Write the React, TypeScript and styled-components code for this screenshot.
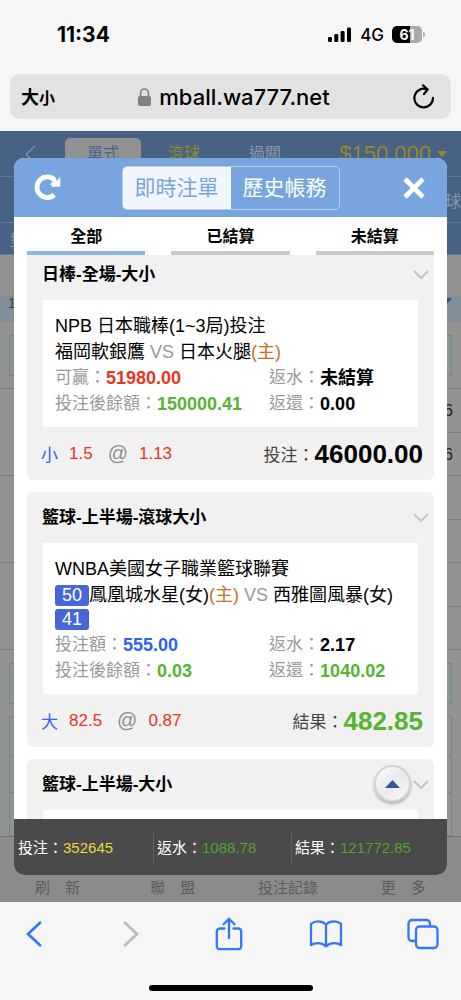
import React, { useEffect, useRef, useState } from "react";
import styled, { createGlobalStyle } from "styled-components";

const GlobalStyle = createGlobalStyle`
  *, *::before, *::after { box-sizing: border-box; }
  body { margin: 0; background: #f6f6f6; }
  button { font: inherit; color: inherit; background: none; border: 0; padding: 0; margin: 0; cursor: pointer; }
  a { color: inherit; text-decoration: none; }
  h2, dl, dd, dt, p { margin: 0; font: inherit; }
`;

const Phone = styled.div`
  display: flex;
  flex-direction: column;
  height: 100vh;
  min-height: 600px;
  background: #f6f6f6;
  color: #000;
  font-family: "Liberation Sans", "Noto Sans CJK TC", sans-serif;
  font-size: 17px;
`;

/* ---------- browser chrome ---------- */

const StatusBar = styled.header`
  display: flex;
  align-items: center;
  justify-content: space-between;
  height: 69px;
  padding: 0 36px 0 57px;
  font-family: Inter, sans-serif;
`;

const Clock = styled.time`
  font-size: 21px;
  font-weight: 700;
`;

const StatusIcons = styled.div`
  display: flex;
  align-items: center;
  gap: 8px;
  font-size: 17px;
  font-weight: 500;
`;

const Battery = styled.div`
  display: flex;
  align-items: center;
  gap: 1px;
  &::after {
    content: "";
    width: 2px;
    height: 5px;
    border-radius: 0 2px 2px 0;
    background: #a9a9a9;
  }
`;

const BatteryBody = styled.div`
  width: 30px;
  height: 17px;
  border-radius: 5px;
  background: linear-gradient(90deg, #000 61%, #a9a9a9 61%);
  color: #fff;
  font-size: 14px;
  font-weight: 700;
  line-height: 17px;
  text-align: center;
`;

const AddressBar = styled.div`
  display: flex;
  align-items: center;
  justify-content: space-between;
  height: 45px;
  margin: 5px 10px 12px;
  padding: 0 16px 0 11px;
  border-radius: 10px;
  background: #e2e2e2;
`;

const TextSizeButton = styled.button`
  font-family: "Noto Sans CJK TC", sans-serif;
  font-size: 18px;
  font-weight: 700;
  line-height: 24px;
  small { font-size: 16px; }
`;

const Address = styled.a`
  display: flex;
  align-items: center;
  gap: 8px;
  font-family: Inter, sans-serif;
  font-size: 22px;
  font-weight: 500;
  line-height: 28px;
`;

const IconButton = styled.button`
  display: flex;
  align-items: center;
  justify-content: center;
`;

const BrowserTools = styled.nav`
  display: flex;
  justify-content: space-between;
  padding: 12px 18px 0 14px;
  color: #3478f6;
`;

const ToolButton = styled(IconButton)`
  width: 40px;
  height: 40px;
  &:disabled { color: #bdbdbd; }
`;

const HomeIndicator = styled.div`
  width: 164px;
  height: 6px;
  margin: 31px auto 9px;
  border-radius: 3px;
  background: #000;
`;

/* ---------- dimmed page behind the dialog ---------- */

const Stage = styled.main`
  flex: 1;
  min-height: 0;
  display: grid;
  grid-template: minmax(0, 1fr) / minmax(0, 1fr);
`;

const Backdrop = styled.div`
  grid-area: 1 / 1;
  display: flex;
  flex-direction: column;
  overflow: hidden;
  background: #939393;
  font-size: 16px;
`;

const SiteBar = styled.div<{ $height: number }>`
  display: flex;
  align-items: center;
  flex: none;
  height: ${(p) => p.$height}px;
  padding: 0 14px 0 24px;
  border-bottom: 1px solid #61799a;
  background: #486286;
  color: #8795a8;
`;

const SiteEdgeText = styled.span<{ $end?: boolean }>`
  margin-left: ${(p) => (p.$end ? "auto" : "-14px")};
  margin-right: ${(p) => (p.$end ? "-14px" : "0")};
`;

const SiteTabs = styled.div`
  display: flex;
  gap: 5px;
  margin-left: 29px;
`;

const SiteTab = styled.span<{ $kind?: "active" | "live" }>`
  width: 76px;
  height: 32px;
  border-radius: 5px;
  line-height: 31px;
  text-align: center;
  background: ${(p) => (p.$kind === "active" ? "#919191" : "transparent")};
  color: ${(p) => (p.$kind === "active" ? "#48658c" : p.$kind === "live" ? "#8d8b2d" : "#8c99aa")};
`;

const Balance = styled.span`
  display: flex;
  align-items: center;
  gap: 6px;
  margin-left: auto;
  color: #95892b;
  font-size: 22px;
  line-height: 24px;
  &::after {
    content: "";
    border: 5px solid transparent;
    border-top: 6px solid #95892b;
    border-bottom: 0;
  }
`;

const LeagueGap = styled.div`
  flex: none;
  height: 42px;
  border-bottom: 1px solid #858c92;
`;

const LeagueRow = styled.div`
  display: flex;
  flex: none;
  justify-content: space-between;
  height: 25px;
  padding: 0 9px 0 8px;
  background: #818d99;
  color: #3b4248;
  font-size: 14px;
  line-height: 12px;
  &::after {
    content: "";
    border: 8px solid transparent;
    border-top: 9px solid #234f94;
    border-bottom: 0;
    height: 0;
    margin-top: 1px;
  }
`;

const OddsStrip = styled.div<{ $line?: boolean }>`
  flex: none;
  padding: 13px 9px 12px;
  border-bottom: ${(p) => (p.$line ? "1px solid #7c7c7c" : "0")};
`;

const OddsBox = styled.div`
  height: 41px;
  border: 1px solid #76897f;
  background: #8b9592;
`;

const OddsGrid = styled.div`
  flex: 1;
  display: grid;
  grid-template-rows: 39px 36px 1fr;
  margin: 0 9px;
  border: 1px solid #76897f;
  background: #8f9593;
`;

const OddsCell = styled.div`
  & + & { border-top: 1px solid #76897f; }
`;

const MatchRow = styled.div`
  flex: none;
  height: 87px;
  border-bottom: 1px solid #7c7c7c;
  text-align: right;
  color: #222;
  line-height: 43px;
`;

const MatchLine = styled.div`
  height: 43px;
  margin-left: 50%;
  padding-right: 8px;
  & + & { border-top: 1px solid #7c7c7c; }
`;

const SiteFooter = styled.div`
  display: grid;
  grid-template-columns: repeat(4, 1fr);
  align-items: end;
  flex: none;
  height: 66px;
  padding-bottom: 3px;
  border-top: 1px solid #707070;
  background: #8b8b8b;
  color: #5c5c5c;
  font-size: 15px;
  line-height: 22px;
  text-align: center;
`;

/* ---------- dialog ---------- */

const Dialog = styled.section`
  grid-area: 1 / 1;
  z-index: 1;
  display: flex;
  flex-direction: column;
  margin: 27px 14px;
  border-radius: 10px;
  overflow: hidden;
  background: #fff;
`;

const DialogHeader = styled.header`
  display: flex;
  align-items: center;
  justify-content: space-between;
  flex: none;
  height: 59px;
  padding: 0 17px;
  background: #78a5de;
  color: #fff;
`;

const DialogButton = styled(IconButton)`
  width: 32px;
  height: 32px;
`;

const Segments = styled.div`
  display: flex;
  border: 1px solid #b4cef0;
  border-radius: 5px;
  overflow: hidden;
`;

const Segment = styled.button<{ $active: boolean }>`
  width: 108px;
  height: 42px;
  font-size: 21px;
  line-height: 42px;
  background: ${(p) => (p.$active ? "#f1f5fd" : "transparent")};
  color: ${(p) => (p.$active ? "#78a5de" : "#fff")};
`;

const Tabs = styled.div`
  display: grid;
  grid-template-columns: repeat(3, 1fr);
  gap: 26px;
  flex: none;
  padding: 0 13px;
`;

const Tab = styled.button<{ $active: boolean }>`
  height: 38px;
  border-bottom: 4px solid ${(p) => (p.$active ? "#8cb3ea" : "#c9c9c9")};
  font-size: 16px;
  font-weight: 700;
  line-height: 40px;
`;

const ListArea = styled.div`
  position: relative;
  display: flex;
  flex: 1;
  min-height: 0;
`;

const List = styled.div`
  display: flex;
  flex: 1;
  flex-direction: column;
  gap: 12px;
  padding: 0 13px;
  overflow-y: auto;
  scrollbar-width: none;
`;

const Card = styled.article`
  flex: none;
  padding: 0 16px;
  border-radius: 6px;
  background: #f1f1f1;
`;

const CardHeader = styled.header`
  display: flex;
  align-items: center;
  justify-content: space-between;
  height: 51px;
  margin: 0 -11px 0 -1px;
  color: #c4c4c4;
  h2 { color: #000; font-weight: 700; line-height: 22px; }
`;

const Details = styled.div`
  min-height: 127px;
  padding: 13px 12px 10px;
  background: #fff;
  line-height: 26px;
`;

const League = styled.p`
  font-size: 18px;
`;

const Teams = styled.p`
  display: flex;
  font-size: 18px;
  white-space: pre;
`;

const Scores = styled.span`
  display: flex;
  flex-direction: column;
  gap: 3px;
  padding: 3px 0 2px;
`;

const Score = styled.span`
  width: 34px;
  height: 21px;
  border-radius: 3px;
  background: #4766d8;
  color: #fff;
  line-height: 21px;
  text-align: center;
`;

const Muted = styled.span`
  color: #999;
`;

const Home = styled.span`
  color: #c47228;
`;

const Facts = styled.dl`
  display: grid;
  grid-template-columns: 61% 39%;
`;

const Fact = styled.div`
  display: flex;
  white-space: nowrap;
`;

const FactName = styled.dt`
  color: #999;
`;

type Tone = "red" | "green" | "blue" | "black";
const tones: Record<Tone, string> = { red: "#ea3323", green: "#56b431", blue: "#2f62ee", black: "#000" };

const FactValue = styled.dd<{ $tone: Tone }>`
  color: ${(p) => tones[p.$tone]};
  font-size: 18px;
  font-weight: 700;
`;

const CardFooter = styled.footer`
  display: flex;
  align-items: center;
  justify-content: space-between;
  height: 53px;
  margin: 0 -5px 0 -2px;
`;

const Pick = styled.div`
  display: flex;
  align-items: center;
  gap: 11px;
  color: #ea3323;
`;

const PickSide = styled.span`
  color: #2f62ee;
`;

const At = styled.span`
  margin-left: 4px;
  color: #8e8e8e;
  font-size: 20px;
`;

const Total = styled.div<{ $tone: Tone }>`
  display: flex;
  align-items: center;
  color: #444;
  strong {
    color: ${(p) => tones[p.$tone]};
    font-size: 26px;
    line-height: 32px;
  }
`;

const ToTop = styled(IconButton)`
  position: absolute;
  right: 36px;
  bottom: 17px;
  width: 37px;
  height: 37px;
  border: 2px solid #d3d3d3;
  border-radius: 50%;
  background: linear-gradient(135deg, #fff, #e9e9ee 50%, #fafafa);
  box-shadow: 0 2px 3px rgba(0, 0, 0, 0.3);
`;

const Summary = styled.footer`
  display: grid;
  grid-template-columns: 139fr 138fr 156fr;
  align-items: center;
  flex: none;
  height: 56px;
  background: #4a4a4a;
  color: #fff;
  font-size: 15px;
`;

const SummaryItem = styled.div`
  height: 33px;
  padding-left: 4px;
  line-height: 33px;
  white-space: nowrap;
  & + & { border-left: 1px solid #616161; padding-left: 3px; }
`;

const SummaryValue = styled.span<{ $color: string }>`
  color: ${(p) => p.$color};
`;

/* ---------- icons ---------- */

const Chevron = () => (
  <svg width="16" height="10" viewBox="0 0 16 10" fill="none" stroke="currentColor" strokeWidth="2" strokeLinecap="round" strokeLinejoin="round">
    <path d="M1.500 1.500 8 8l6.500-6.500" />
  </svg>
);

const Signal = () => (
  <svg width="24" height="16" viewBox="0 0 24 16">
    <rect x="0" y="10" width="4" height="5" rx="1.300" />
    <rect x="6.300" y="7" width="4" height="8" rx="1.300" />
    <rect x="12.600" y="4" width="4" height="11" rx="1.300" />
    <rect x="19" y="0.500" width="4" height="14.500" rx="1.300" />
  </svg>
);

const Lock = () => (
  <svg width="13" height="18" viewBox="0 0 13 18">
    <rect x="0" y="8" width="13" height="10" rx="2" fill="#808085" />
    <path d="M2.600 8.500V5a3.900 4 0 0 1 7.800 0v3.500" fill="none" stroke="#808085" strokeWidth="1.600" />
  </svg>
);

const Reload = () => (
  <svg width="22" height="25" viewBox="0 0 22 25" fill="none" stroke="#000" strokeWidth="2.200" strokeLinecap="round" strokeLinejoin="round">
    <path d="M20 13.800A9.300 9.300 0 1 1 14.200 5.400" />
    <path d="M10 1.300 14.600 5.500 11 10.200" />
  </svg>
);

const Rotate = () => (
  <svg width="27" height="27" viewBox="0 0 27 27">
    <path d="M20.200 20.900A10.300 10.300 0 1 1 20.800 6.200" fill="none" stroke="#fff" strokeWidth="4.800" />
    <path d="M26.300 3V12.700H17z" fill="#fff" />
    <path d="M16 10.500l5.500-5.500 3 3-4 4.700z" fill="#fff" />
  </svg>
);

const Cross = () => (
  <svg width="24" height="24" viewBox="0 0 24 24" fill="none" stroke="#fff" strokeWidth="4.600">
    <path d="M3 3 21 21M21 3 3 21" />
  </svg>
);

const stroke = { fill: "none", stroke: "currentColor", strokeWidth: 2.3, strokeLinecap: "round", strokeLinejoin: "round" } as const;

const BackIcon = () => (
  <svg width="16" height="26" viewBox="0 0 16 26" {...stroke} strokeWidth={2.8}><path d="M14 1.800 2 13l12 11.200" /></svg>
);
const ForwardIcon = () => (
  <svg width="16" height="26" viewBox="0 0 16 26" {...stroke} strokeWidth={2.8}><path d="M2 1.800 14 13 2 24.200" /></svg>
);
const ShareIcon = () => (
  <svg width="28" height="34" viewBox="0 0 28 34" {...stroke}>
    <path d="M9.500 11.500H4.800a3 3 0 0 0-3 3v14.700a3 3 0 0 0 3 3h18.400a3 3 0 0 0 3-3V14.500a3 3 0 0 0-3-3h-4.700" />
    <path d="M14 21V1.800M8.500 7.300 14 1.800l5.500 5.500" />
  </svg>
);
const BookIcon = () => (
  <svg width="34" height="28" viewBox="0 0 34 28" {...stroke}>
    <path d="M17 4.500C14.800 2.300 12 1.400 9 1.400S3.800 2.300 2 3.800v21.400c2-1.500 4.500-2.100 7-2.100 3 0 5.800 1 8 3.300 2.200-2.300 5-3.300 8-3.300 2.500 0 5 .6 7 2.100V3.800c-1.800-1.500-4-2.400-7-2.400s-5.800.9-8 3.100zM17 4.500v21.500" />
  </svg>
);
const TabsIcon = () => (
  <svg width="32" height="32" viewBox="0 0 32 32" {...stroke}>
    <rect x="9" y="8.500" width="21.500" height="21.500" rx="3.500" />
    <path d="M8.500 23H5a3.500 3.500 0 0 1-3.500-3.500V5.500A3.500 3.500 0 0 1 5 2h14.500A3.500 3.500 0 0 1 23 5.500v2.500" />
  </svg>
);

/* ---------- data ---------- */

interface FactData { name: string; value: string; tone: Tone }
interface Bet {
  title: string;
  league?: string;
  scores?: string[];
  home?: string;
  away?: React.ReactNode;
  facts?: FactData[];
  side?: string;
  line?: string;
  odds?: string;
  totalName?: string;
  total?: string;
  totalTone?: Tone;
}

const bets: Bet[] = [
  {
    title: "日棒-全場-大小",
    league: "NPB 日本職棒(1~3局)投注",
    home: "福岡軟銀鷹",
    away: <>日本火腿<Home>(主)</Home></>,
    facts: [
      { name: "可贏", value: "51980.00", tone: "red" },
      { name: "返水", value: "未結算", tone: "black" },
      { name: "投注後餘額", value: "150000.41", tone: "green" },
      { name: "返還", value: "0.00", tone: "black" },
    ],
    side: "小", line: "1.5", odds: "1.13",
    totalName: "投注", total: "46000.00", totalTone: "black",
  },
  {
    title: "籃球-上半場-滾球大小",
    league: "WNBA美國女子職業籃球聯賽",
    scores: ["50", "41"],
    home: "鳳凰城水星(女)",
    away: "西雅圖風暴(女)",
    facts: [
      { name: "投注額", value: "555.00", tone: "blue" },
      { name: "返水", value: "2.17", tone: "black" },
      { name: "投注後餘額", value: "0.03", tone: "green" },
      { name: "返還", value: "1040.02", tone: "green" },
    ],
    side: "大", line: "82.5", odds: "0.87",
    totalName: "結果", total: "482.85", totalTone: "green",
  },
  { title: "籃球-上半場-大小" },
];

const BetCard = ({ bet }: { bet: Bet }) => (
  <Card>
    <CardHeader>
      <h2>{bet.title}</h2>
      <IconButton aria-label="展開"><Chevron /></IconButton>
    </CardHeader>
    <Details>
      {bet.league && <League>{bet.league}</League>}
      {bet.home && (
        <Teams>
          {bet.scores && <Scores>{bet.scores.map((s) => <Score key={s}>{s}</Score>)}</Scores>}
          <span>{bet.home}{bet.scores && <Home>(主)</Home>}<Muted> VS </Muted>{bet.away}</span>
        </Teams>
      )}
      {bet.facts && (
        <Facts>
          {bet.facts.map((f) => (
            <Fact key={f.name}>
              <FactName>{f.name}：</FactName>
              <FactValue $tone={f.tone}>{f.value}</FactValue>
            </Fact>
          ))}
        </Facts>
      )}
    </Details>
    {bet.total && (
      <CardFooter>
        <Pick>
          <PickSide>{bet.side}</PickSide>
          <span>{bet.line}</span>
          <At>@</At>
          <span>{bet.odds}</span>
        </Pick>
        <Total $tone={bet.totalTone ?? "black"}>{bet.totalName}：<strong>{bet.total}</strong></Total>
      </CardFooter>
    )}
  </Card>
);

export default function App() {
  const [segment, setSegment] = useState("即時注單");
  const [tab, setTab] = useState("全部");
  const list = useRef<HTMLDivElement>(null);

  useEffect(() => {
    if (list.current) list.current.scrollTop = 6;
  }, []);

  return (
    <Phone>
      <GlobalStyle />
      <StatusBar>
        <Clock>11:34</Clock>
        <StatusIcons>
          <Signal />
          <span>4G</span>
          <Battery><BatteryBody>61</BatteryBody></Battery>
        </StatusIcons>
      </StatusBar>
      <AddressBar>
        <TextSizeButton>大<small>小</small></TextSizeButton>
        <Address href="#"><Lock />mball.wa777.net</Address>
        <IconButton aria-label="重新載入"><Reload /></IconButton>
      </AddressBar>

      <Stage>
        <Backdrop aria-hidden="true">
          <SiteBar $height={46}>
            <svg width="12" height="18" viewBox="0 0 12 18" fill="none" stroke="#8795a8" strokeWidth="1.200"><path d="M11 1 2 9.500l9 8" /></svg>
            <SiteTabs>
              <SiteTab $kind="active">單式</SiteTab>
              <SiteTab $kind="live">滾球</SiteTab>
              <SiteTab>過關</SiteTab>
            </SiteTabs>
            <Balance>$150,000</Balance>
          </SiteBar>
          <SiteBar $height={46}><SiteEdgeText $end>球</SiteEdgeText></SiteBar>
          <SiteBar $height={32}><SiteEdgeText>對</SiteEdgeText></SiteBar>
          <LeagueGap />
          <LeagueRow>1</LeagueRow>
          <OddsStrip $line><OddsBox /></OddsStrip>
          <MatchRow><MatchLine>6</MatchLine><MatchLine>6</MatchLine></MatchRow>
          <MatchRow><MatchLine /><MatchLine /></MatchRow>
          <MatchRow><MatchLine /><MatchLine /></MatchRow>
          <OddsStrip><OddsBox /></OddsStrip>
          <OddsGrid><OddsCell /><OddsCell /><OddsCell /></OddsGrid>
          <SiteFooter>
            <span>刷　新</span>
            <span>聯　盟</span>
            <span>投注記錄</span>
            <span>更　多</span>
          </SiteFooter>
        </Backdrop>

        <Dialog role="dialog" aria-label={segment}>
          <DialogHeader>
            <DialogButton aria-label="刷新"><Rotate /></DialogButton>
            <Segments>
              {["即時注單", "歷史帳務"].map((s) => (
                <Segment key={s} $active={segment === s} onClick={() => setSegment(s)}>{s}</Segment>
              ))}
            </Segments>
            <DialogButton aria-label="關閉"><Cross /></DialogButton>
          </DialogHeader>
          <Tabs>
            {["全部", "已結算", "未結算"].map((t) => (
              <Tab key={t} $active={tab === t} onClick={() => setTab(t)}>{t}</Tab>
            ))}
          </Tabs>
          <ListArea>
            <List ref={list}>
              {bets.map((b) => <BetCard key={b.title} bet={b} />)}
            </List>
            <ToTop aria-label="回到頂部" onClick={() => list.current?.scrollTo({ top: 0 })}>
              <svg width="15" height="8" viewBox="0 0 15 8"><path d="M7.500 0 15 8H0z" fill="#35588f" /></svg>
            </ToTop>
          </ListArea>
          <Summary>
            <SummaryItem>投注：<SummaryValue $color="#ecd63e">352645</SummaryValue></SummaryItem>
            <SummaryItem>返水：<SummaryValue $color="#4fa32e">1088.78</SummaryValue></SummaryItem>
            <SummaryItem>結果：<SummaryValue $color="#4fa32e">121772.85</SummaryValue></SummaryItem>
          </Summary>
        </Dialog>
      </Stage>

      <BrowserTools>
        <ToolButton aria-label="上一頁"><BackIcon /></ToolButton>
        <ToolButton aria-label="下一頁" disabled><ForwardIcon /></ToolButton>
        <ToolButton aria-label="分享"><ShareIcon /></ToolButton>
        <ToolButton aria-label="書籤"><BookIcon /></ToolButton>
        <ToolButton aria-label="分頁"><TabsIcon /></ToolButton>
      </BrowserTools>
      <HomeIndicator />
    </Phone>
  );
}
